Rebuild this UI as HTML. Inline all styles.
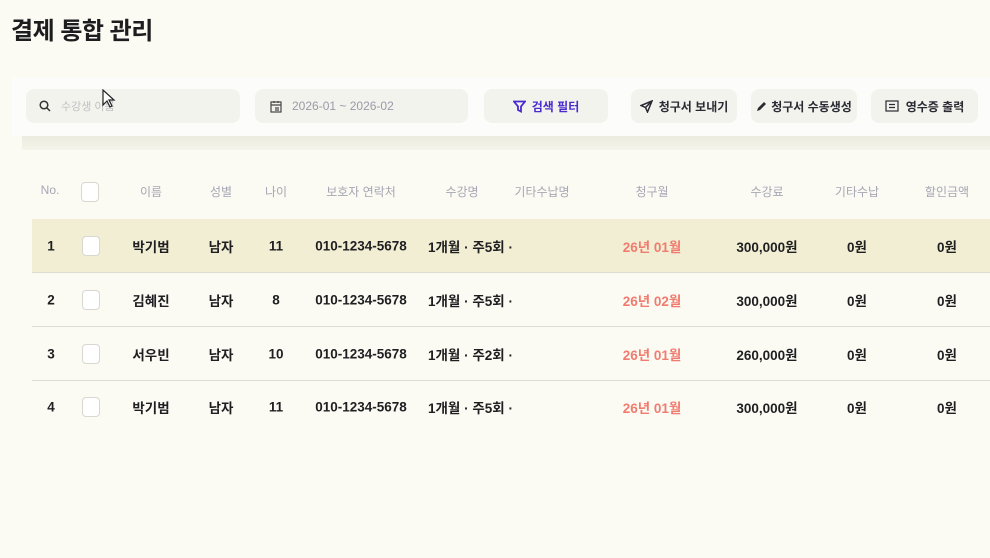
<!DOCTYPE html>
<html><head><meta charset="utf-8"><style>
*{box-sizing:border-box;margin:0;padding:0}
body{width:990px;height:558px;overflow:hidden;background:#fbfbf4;font-family:"Liberation Sans","Noto Sans CJK KR",sans-serif;position:relative;color:#1f1f22}
.abs{position:absolute}
h1{position:absolute;left:11px;top:11px;font-size:24px;font-weight:700;letter-spacing:-0.5px;color:#1d1d1f}
.bar{left:12px;top:78px;width:978px;height:58px;background:#fcfcfa}
.shadow{left:22px;top:136px;width:968px;height:14px;background:linear-gradient(#ebebdf,#f4f4ea)}
.box{position:absolute;top:89px;height:34px;border-radius:8px;background:#f3f3ee;display:flex;align-items:center;font-size:12px}
.btn{justify-content:center;font-weight:700;color:#2a2a33;gap:6px}
.th{position:absolute;top:183px;font-size:12px;color:#a6a6b4;transform:translateX(-50%);white-space:nowrap}
.row{position:absolute;left:32px;width:958px;height:54px;border-bottom:1px solid #dcdcd0}
.c{position:absolute;top:50%;transform:translate(-50%,-50%);font-size:13.5px;font-weight:700;white-space:nowrap}
.cb{position:absolute;width:18px;height:20px;border:1px solid #d8d8d0;border-radius:4px;background:#fff;transform:translate(-50%,-50%);top:50%}
.red{color:#f07b6e}
</style></head><body>
<h1>결제 통합 관리</h1>
<div class="abs bar"></div>
<div class="abs shadow"></div>
<div class="box" style="left:26px;width:214px;padding-left:13px;color:#c0c0c4">
<svg width="12" height="12" viewBox="0 0 12 12" fill="none" stroke="#333" stroke-width="1.5"><circle cx="5" cy="5" r="3.8"/><path d="M8 8l3 3"/></svg><span style="margin-left:10px;font-size:11px">수강생 이름</span></div>
<div class="box" style="left:255px;width:213px;padding-left:15px;color:#9a9aa8">
<svg width="12" height="13" viewBox="0 0 12 13" fill="none" stroke="#444" stroke-width="1.2"><rect x="1" y="2" width="10" height="10"/><path d="M1 5h10M4 1v2M8 1v2M5 8h4M5 10h4"/></svg><span style="margin-left:10px">2026-01 ~ 2026-02</span></div>
<div class="box btn" style="left:484px;width:124px;color:#4a2bd0"><svg width="13" height="13" viewBox="0 0 13 13" fill="none" stroke="#4a2bd0" stroke-width="1.8"><path d="M1 1.5h11L8 6.5v5l-3-1.5v-3.5z"/></svg>검색 필터</div>
<div class="box btn" style="left:631px;width:106px"><svg width="13" height="13" viewBox="0 0 13 13" fill="none" stroke="#2a2a33" stroke-width="1.5"><path d="M12 1L1 5.5l4.5 2L7.5 12z M12 1L5.5 7.5"/></svg>청구서 보내기</div>
<div class="box btn" style="left:751px;width:106px;gap:4px"><svg width="11" height="11" viewBox="0 0 11 11"><path d="M1 10l1-3 6-6 2 2-6 6z" fill="#2a2a33"/></svg>청구서 수동생성</div>
<div class="box btn" style="left:871px;width:107px;gap:7px"><svg width="14" height="12" viewBox="0 0 14 12" fill="none" stroke="#2a2a33" stroke-width="1.2"><rect x="1" y="1" width="12" height="10"/><path d="M4 4.5h6M4 7.5h6"/></svg>영수증 출력</div>

<div class="th" style="left:50px">No.</div>
<div class="cb" style="left:90px;top:192px"></div>
<div class="th" style="left:151px">이름</div>
<div class="th" style="left:221px">성별</div>
<div class="th" style="left:276px">나이</div>
<div class="th" style="left:361px">보호자 연락처</div>
<div class="th" style="left:462px">수강명</div>
<div class="th" style="left:542px">기타수납명</div>
<div class="th" style="left:652px">청구월</div>
<div class="th" style="left:767px">수강료</div>
<div class="th" style="left:857px">기타수납</div>
<div class="th" style="left:947px">할인금액</div>

<div class="row" style="top:219px;background:#f1eed3"><div class="c" style="left:19px">1</div><div class="cb" style="left:59px"></div><div class="c" style="left:119px">박기범</div><div class="c" style="left:189px">남자</div><div class="c" style="left:244px">11</div><div class="c" style="left:329px">010-1234-5678</div><div class="c" style="left:396px;transform:translateY(-50%)">1개월 · 주5회 ·</div><div class="c red" style="left:620px">26년 01월</div><div class="c" style="left:735px">300,000원</div><div class="c" style="left:825px">0원</div><div class="c" style="left:915px">0원</div></div>
<div class="row" style="top:273px"><div class="c" style="left:19px">2</div><div class="cb" style="left:59px"></div><div class="c" style="left:119px">김혜진</div><div class="c" style="left:189px">남자</div><div class="c" style="left:244px">8</div><div class="c" style="left:329px">010-1234-5678</div><div class="c" style="left:396px;transform:translateY(-50%)">1개월 · 주5회 ·</div><div class="c red" style="left:620px">26년 02월</div><div class="c" style="left:735px">300,000원</div><div class="c" style="left:825px">0원</div><div class="c" style="left:915px">0원</div></div>
<div class="row" style="top:327px"><div class="c" style="left:19px">3</div><div class="cb" style="left:59px"></div><div class="c" style="left:119px">서우빈</div><div class="c" style="left:189px">남자</div><div class="c" style="left:244px">10</div><div class="c" style="left:329px">010-1234-5678</div><div class="c" style="left:396px;transform:translateY(-50%)">1개월 · 주2회 ·</div><div class="c red" style="left:620px">26년 01월</div><div class="c" style="left:735px">260,000원</div><div class="c" style="left:825px">0원</div><div class="c" style="left:915px">0원</div></div>
<div class="row" style="top:380px;border-bottom:none"><div class="c" style="left:19px">4</div><div class="cb" style="left:59px"></div><div class="c" style="left:119px">박기범</div><div class="c" style="left:189px">남자</div><div class="c" style="left:244px">11</div><div class="c" style="left:329px">010-1234-5678</div><div class="c" style="left:396px;transform:translateY(-50%)">1개월 · 주5회 ·</div><div class="c red" style="left:620px">26년 01월</div><div class="c" style="left:735px">300,000원</div><div class="c" style="left:825px">0원</div><div class="c" style="left:915px">0원</div></div>
<svg class="abs" style="left:102px;top:89px" width="14" height="20" viewBox="0 0 14 20"><path d="M1 1v15l4-4 3 6 2-1-3-6h5z" fill="#fff" stroke="#222" stroke-width="1.2"/></svg>
</body></html>
